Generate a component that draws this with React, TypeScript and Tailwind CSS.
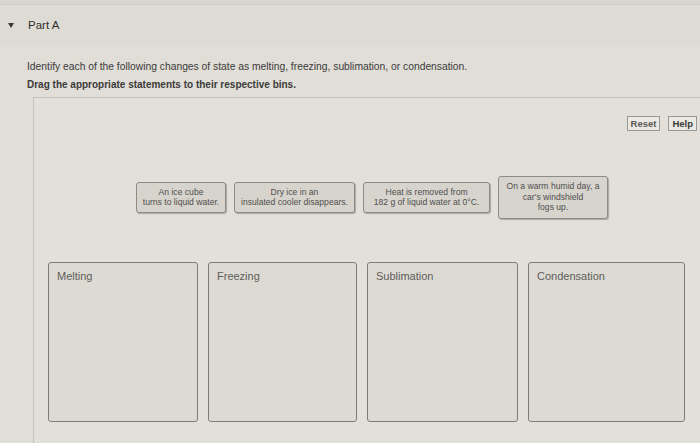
import React from "react";

const cards = [
  { id: "c1", w: "w-[90px]", lines: ["An ice cube", "turns to liquid water."] },
  { id: "c2", w: "w-[121px]", lines: ["Dry ice in an", "insulated cooler disappears."] },
  { id: "c3", w: "w-[127px]", lines: ["Heat is removed from", "182  g of liquid water at 0\u00b0C."] },
  { id: "c4", w: "w-[110px]", lines: ["On a warm humid day, a", "car's windshield", "fogs up."] },
];

const bins = [
  { id: "b1", label: "Melting", w: "w-[150px]" },
  { id: "b2", label: "Freezing", w: "w-[149px]" },
  { id: "b3", label: "Sublimation", w: "w-[151px]" },
  { id: "b4", label: "Condensation", w: "w-[157px]" },
];

export default function App() {
  return (
    <div className="w-[700px] h-[443px] overflow-hidden bg-[#dedbd4] text-[#3a3a38] font-['Liberation_Sans',Arial,sans-serif] flex flex-col">
      {/* Part header */}
      <div className="h-[5px] bg-[#d9d6cf] border-b border-[#cfccc5]" />
      <div className="flex items-center h-[40px] pl-[8px]">
        <svg width="6" height="5" viewBox="0 0 6 5" className="mr-[14px] mt-[1px]">
          <path d="M0 0 L6 0 L3 5 Z" fill="#3a3a3a" />
        </svg>
        <span className="text-[11.5px] text-[#2f2f2f] mt-[2px]">Part A</span>
      </div>

      {/* Instructions */}
      <div className="flex-1 flex flex-col bg-[#e1ded7] pt-[16px]">
        <p className="pl-[27px] text-[10.3px] leading-[12px] text-[#3b3b3b]">
          Identify each of the following changes of state as melting, freezing, sublimation, or condensation.
        </p>
        <p className="pl-[27px] mt-[6px] text-[10px] leading-[12px] font-bold text-[#3b3b3b]">
          Drag the appropriate statements to their respective bins.
        </p>

        {/* Drag panel */}
        <div className="flex-1 mt-[6px] ml-[33px] border-l border-t border-[#c5c2bb] bg-[#e3e0d9] flex flex-col">
          <div className="flex justify-end gap-[8px] pr-[3px] pt-[18px]">
            <button className="px-[3px] h-[15px] border border-[#9a9893] bg-[#ebe9e3] text-[9.5px] leading-[13px] font-bold text-[#5a5a58]">
              Reset
            </button>
            <button className="px-[3px] h-[15px] border border-[#9a9893] bg-[#ebe9e3] text-[9.5px] leading-[13px] font-bold text-[#3a3a38]">
              Help
            </button>
          </div>

          <div className="flex items-center gap-[8px] pl-[102px] mt-[44px] h-[44px]">
            {cards.map((c) => (
              <div
                key={c.id}
                className={`${c.w} ${c.lines.length > 2 ? "h-[43px]" : "h-[31px]"} shrink-0 rounded-[3px] border border-[#8d8b86] bg-[#d7d4cd] shadow-[1px_1px_1px_rgba(0,0,0,0.25)] flex flex-col items-center justify-center text-[8.6px] leading-[10.5px] text-[#4f4f4d] whitespace-nowrap`}
              >
                {c.lines.map((l) => (
                  <span key={l}>{l}</span>
                ))}
              </div>
            ))}
          </div>

          <div className="flex gap-[10px] pl-[14px] mt-[43px]">
            {bins.map((b) => (
              <div
                key={b.id}
                className={`${b.w} h-[160px] shrink-0 rounded-[3px] border border-[#7d7b77] bg-[#dddad3] pl-[8px]`}
              >
                <span className="text-[11px] leading-[14px] text-[#5d5d5b]">{b.label}</span>
              </div>
            ))}
          </div>
        </div>
      </div>
    </div>
  );
}
